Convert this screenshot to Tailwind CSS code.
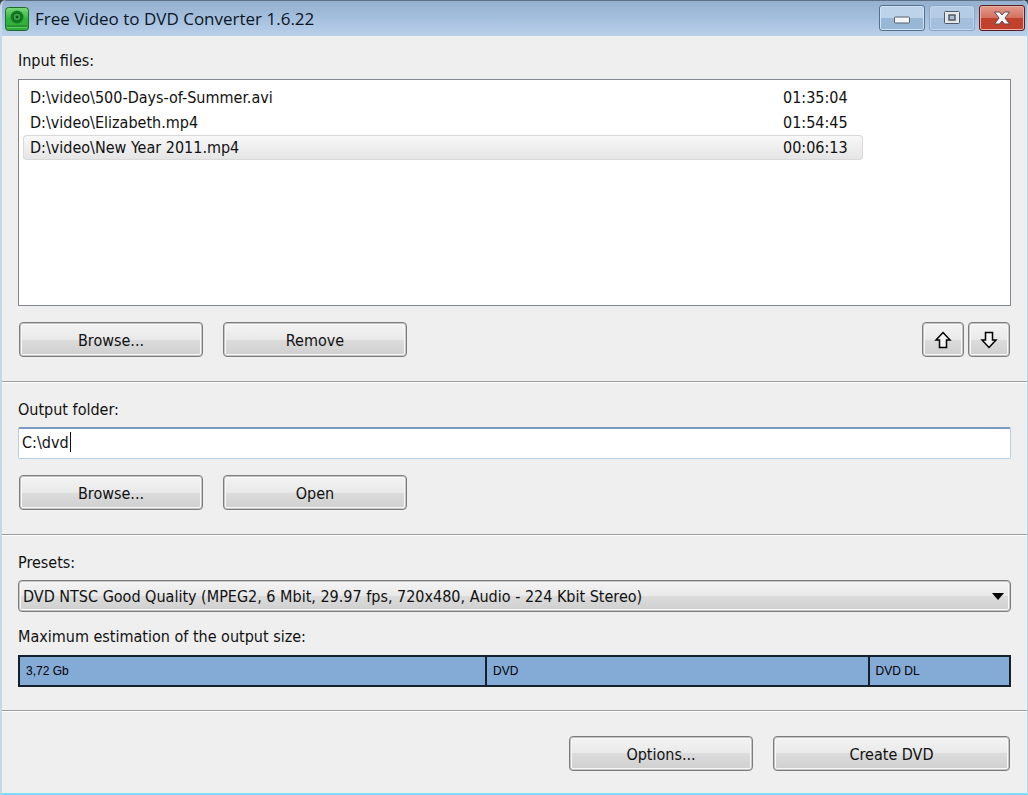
<!DOCTYPE html>
<html lang="en">
<head>
    <meta charset="UTF-8" />
    <meta name="viewport" content="width=device-width, initial-scale=1" />
    <title>Free Video to DVD Converter 1.6.22</title>
    <script src="https://cdn.jsdelivr.net/npm/@tailwindcss/browser@4"></script>
</head>
<body class="bg-[#3d4650] font-['DejaVu_Sans_Condensed','DejaVu_Sans',sans-serif] text-base leading-6 text-[#111]">

    <div class="min-h-screen flex flex-col rounded-t-md overflow-hidden bg-[#efefef] border-l-2 border-r border-b-2 border-l-[#c3d9ea] border-r-[#a9dcf3] border-b-[#7fdcf8]">

        <!-- Title bar -->
        <header class="h-9 pl-[3px] flex items-center justify-between bg-linear-to-b from-[#95b0cf] via-[#a5c0df] to-[#bad0e9] border-t border-[#5d6f82]">
            <div class="flex items-center gap-1.5">
                <svg class="size-6" viewBox="0 0 24 24" fill="none">
                    <defs>
                        <linearGradient id="appGreen" x1="0" y1="0" x2="0" y2="1">
                            <stop offset="0" stop-color="#7fd87c" />
                            <stop offset="0.5" stop-color="#2fb53a" />
                            <stop offset="1" stop-color="#36a83d" />
                        </linearGradient>
                    </defs>
                    <rect x="0.5" y="0.5" width="23" height="23" rx="3" fill="url(#appGreen)" stroke="#1f6b29" />
                    <path d="M2 19h20" stroke="#1d7a28" />
                    <path d="M2 20.500h20" stroke="#58c95c" />
                    <circle cx="12" cy="10" r="6.500" fill="#157a26" />
                    <circle cx="12" cy="10" r="4" fill="#3aa848" stroke="#0f5f1d" />
                    <circle cx="12" cy="10" r="1.500" fill="#0d4d18" />
                </svg>
                <h1 class="font-['Open_Sans','Noto_Sans',sans-serif] text-[17px] text-[#0c1524]">Free Video to DVD Converter 1.6.22</h1>
            </div>
            <div class="flex gap-1 pr-0.5 pb-0.5">
                <button type="button" aria-label="Minimize" class="w-[46px] h-[26px] flex items-center justify-center rounded-[3px] border border-[#52708f] bg-linear-to-b from-[#bcd3ea] from-50% to-[#98b6d6] to-50% shadow-[inset_0_0_0_1px_#d3e3f3]">
                    <svg class="w-[18px] h-4" viewBox="0 0 18 16"><rect x="1.500" y="7" width="15" height="6" rx="1" fill="#f4f4f4" stroke="#55606e" /></svg>
                </button>
                <button type="button" aria-label="Maximize" class="w-[46px] h-[26px] flex items-center justify-center rounded-[3px] border border-[#8aa5c2] bg-linear-to-b from-[#b4cce6] from-50% to-[#a3bfdd] to-50% shadow-[inset_0_0_0_1px_#c2d6ec]">
                    <svg class="w-[18px] h-4" viewBox="0 0 18 16">
                        <rect x="1.500" y="1.500" width="15" height="12" rx="1" fill="#e4e7ea" stroke="#4f5965" />
                        <rect x="6" y="5" width="6" height="5" fill="#a9c1da" stroke="#4f5965" stroke-width="1.500" />
                    </svg>
                </button>
                <button type="button" aria-label="Close" class="w-[46px] h-[26px] flex items-center justify-center rounded-[3px] border border-[#5a1d20] bg-linear-to-b from-[#e39a8c] from-0% via-[#d4705f] via-50% to-[#c2412d] to-50% shadow-[inset_0_0_0_1px_#eab0a5]">
                    <svg class="w-[18px] h-4" viewBox="0 0 18 16"><path d="M1.500 2H6.500L9 5l2.500-3h5L12 8l4.500 6h-5L9 11l-2.500 3h-5L6 8z" fill="#f6f6f6" stroke="#5c4a52" /></svg>
                </button>
            </div>
        </header>

        <main class="flex-1 flex flex-col">

            <!-- Input files -->
            <section class="flex-1 flex flex-col px-4 pt-[13px] pb-6 border-b border-[#9c9c9c]">
                <h2 id="filesLabel" class="mb-1.5">Input files:</h2>
                <div class="flex-1 min-h-32 px-1 py-[5px] bg-white border border-[#828790]">
                    <table aria-labelledby="filesLabel" class="w-[840px] max-w-full border-separate border-spacing-0">
                        <tbody>
                            <tr class="h-[25px]">
                                <td class="pl-[7px] py-0">D:\video\500-Days-of-Summer.avi</td>
                                <td class="w-20 py-0">01:35:04</td>
                            </tr>
                            <tr class="h-[25px]">
                                <td class="pl-[7px] py-0">D:\video\Elizabeth.mp4</td>
                                <td class="w-20 py-0">01:54:45</td>
                            </tr>
                            <tr class="h-[25px]" aria-selected="true">
                                <td class="pl-1.5 py-0 leading-[23px] rounded-l border border-r-0 border-[#d9d9d9] bg-linear-to-b from-[#f8f8f8] to-[#e5e5e5]">D:\video\New Year 2011.mp4</td>
                                <td class="w-20 py-0 leading-[23px] rounded-r border border-l-0 border-[#d9d9d9] bg-linear-to-b from-[#f8f8f8] to-[#e5e5e5]">00:06:13</td>
                            </tr>
                        </tbody>
                    </table>
                </div>
                <div class="mt-4 px-px flex justify-between">
                    <div class="flex gap-5">
                        <button type="button" class="w-[184px] h-[35px] pt-0.5 rounded border border-[#7d7d7d] bg-[linear-gradient(#f4f4f4,#e9e9e9_50%,#dcdcdc_50%,#cfcfcf)] shadow-[inset_0_0_0_1px_#c4c4c4,inset_0_0_0_2px_#f8f8f8]">Browse...</button>
                        <button type="button" class="w-[184px] h-[35px] pt-0.5 rounded border border-[#7d7d7d] bg-[linear-gradient(#f4f4f4,#e9e9e9_50%,#dcdcdc_50%,#cfcfcf)] shadow-[inset_0_0_0_1px_#c4c4c4,inset_0_0_0_2px_#f8f8f8]">Remove</button>
                    </div>
                    <div class="flex gap-1">
                        <button type="button" aria-label="Move up" class="w-[42px] h-[35px] flex items-center justify-center rounded border border-[#7d7d7d] bg-[linear-gradient(#f4f4f4,#e9e9e9_50%,#dcdcdc_50%,#cfcfcf)] shadow-[inset_0_0_0_1px_#c4c4c4,inset_0_0_0_2px_#f8f8f8]">
                            <svg class="size-[18px]" viewBox="0 0 18 18"><path d="M9 1.500L16 9h-3.500v7.500h-7V9H2z" fill="#f4f4f4" stroke="#000" stroke-width="1.500" /></svg>
                        </button>
                        <button type="button" aria-label="Move down" class="w-[42px] h-[35px] flex items-center justify-center rounded border border-[#7d7d7d] bg-[linear-gradient(#f4f4f4,#e9e9e9_50%,#dcdcdc_50%,#cfcfcf)] shadow-[inset_0_0_0_1px_#c4c4c4,inset_0_0_0_2px_#f8f8f8]">
                            <svg class="size-[18px]" viewBox="0 0 18 18"><path d="M9 16.500L16 9h-3.500V1.500h-7V9H2z" fill="#f4f4f4" stroke="#000" stroke-width="1.500" /></svg>
                        </button>
                    </div>
                </div>
            </section>

            <!-- Output folder -->
            <section class="px-4 pt-[15px] pb-6 border-t border-t-white border-b border-b-[#9c9c9c]">
                <label for="outputFolder" class="block mb-[5px]">Output folder:</label>
                <div class="relative">
                    <input id="outputFolder" type="text" value="C:\dvd" class="block w-full h-8 pl-[3px] pb-0.5 bg-white border border-[#b5cfe7] border-t-2 border-t-[#7b9cc0] rounded-xs outline-none" />
                    <span class="absolute left-[52px] top-[5px] w-px h-5 bg-[#111]"></span>
                </div>
                <div class="mt-4 px-px flex gap-5">
                    <button type="button" class="w-[184px] h-[35px] pt-0.5 rounded border border-[#7d7d7d] bg-[linear-gradient(#f4f4f4,#e9e9e9_50%,#dcdcdc_50%,#cfcfcf)] shadow-[inset_0_0_0_1px_#c4c4c4,inset_0_0_0_2px_#f8f8f8]">Browse...</button>
                    <button type="button" class="w-[184px] h-[35px] pt-0.5 rounded border border-[#7d7d7d] bg-[linear-gradient(#f4f4f4,#e9e9e9_50%,#dcdcdc_50%,#cfcfcf)] shadow-[inset_0_0_0_1px_#c4c4c4,inset_0_0_0_2px_#f8f8f8]">Open</button>
                </div>
            </section>

            <!-- Presets and size -->
            <section class="px-4 pt-[15px] pb-[23px] border-t border-t-white border-b border-b-[#9c9c9c]">
                <label for="preset" class="block mb-[5px]">Presets:</label>
                <div class="relative">
                    <select id="preset" class="appearance-none block w-full h-8 pl-1 pt-0.5 rounded border border-[#7d7d7d] bg-[linear-gradient(#f4f4f4,#e9e9e9_50%,#dcdcdc_50%,#cfcfcf)] shadow-[inset_0_0_0_1px_#c4c4c4,inset_0_0_0_2px_#f8f8f8]">
                        <option>DVD NTSC Good Quality (MPEG2, 6 Mbit, 29.97 fps, 720x480, Audio - 224 Kbit Stereo)</option>
                    </select>
                    <svg class="absolute right-[7px] top-[13px] w-3 h-[7px] pointer-events-none" viewBox="0 0 12 7"><path d="M0 0h12L6 7z" fill="#000" /></svg>
                </div>
                <h2 class="mt-[13px] mb-1.5">Maximum estimation of the output size:</h2>
                <div class="h-8 grid grid-cols-[469fr_384fr_140fr] border-2 border-[#14202e] bg-[#84aad6] divide-x-2 divide-[#14202e] font-['Liberation_Sans',Arial,sans-serif] text-xs leading-7 text-black">
                    <span class="pl-1.5">3,72 Gb</span>
                    <span class="pl-1.5">DVD</span>
                    <span class="pl-1.5">DVD DL</span>
                </div>
            </section>
        </main>

        <footer class="px-[17px] pt-6 pb-[22px] flex justify-end gap-5 border-t border-white">
            <button type="button" class="w-[184px] h-[35px] pt-0.5 rounded border border-[#7d7d7d] bg-[linear-gradient(#f4f4f4,#e9e9e9_50%,#dcdcdc_50%,#cfcfcf)] shadow-[inset_0_0_0_1px_#c4c4c4,inset_0_0_0_2px_#f8f8f8]">Options...</button>
            <button type="button" class="w-[237px] h-[35px] pt-0.5 rounded border border-[#7d7d7d] bg-[linear-gradient(#f4f4f4,#e9e9e9_50%,#dcdcdc_50%,#cfcfcf)] shadow-[inset_0_0_0_1px_#c4c4c4,inset_0_0_0_2px_#f8f8f8]">Create DVD</button>
        </footer>
    </div>

</body>
</html>
